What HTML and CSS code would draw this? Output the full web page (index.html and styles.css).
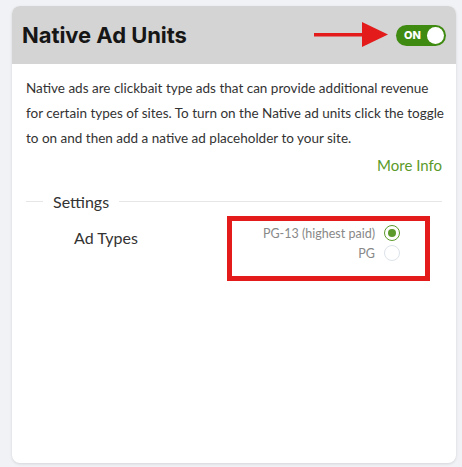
FILE: index.html
```html
<!DOCTYPE html>
<html>
<head>
<meta charset="utf-8">
<link rel="stylesheet" href="styles.css">
</head>
<body>
<div class="card">
  <div class="card-header">
    <h1 class="title">Native Ad Units</h1>
    <div class="header-right">
      <svg class="arrow" width="74" height="26" viewBox="0 0 74 26">
        <rect x="0" y="11" width="52" height="3.5" fill="#e31b1b"/>
        <polygon points="48,0 74,12.5 48,25" fill="#e31b1b"/>
      </svg>
      <div class="toggle"><span class="toggle-label">ON</span><span class="knob"></span></div>
    </div>
  </div>
  <div class="card-body">
    <p class="desc">Native ads are clickbait type ads that can provide additional revenue<br>for certain types of sites. To turn on the Native ad units click the toggle<br>to on and then add a native ad placeholder to your site.</p>
    <div class="more"><a class="more-link">More Info</a></div>
    <fieldset class="settings">
      <legend class="legend">Settings</legend>
      <div class="row">
        <div class="row-label">Ad Types</div>
        <div class="options">
          <label class="option"><span>PG-13 (highest paid)</span><span class="radio checked"></span></label>
          <label class="option"><span>PG</span><span class="radio"></span></label>
        </div>
      </div>
    </fieldset>
  </div>
</div>
</body>
</html>
```
FILE: styles.css
```css
html, body { margin: 0; padding: 0; }
body {
  background: #f1f2f6;
  width: 462px;
  height: 467px;
  padding: 6px 6px 0 12px;
  box-sizing: border-box;
  font-family: "Source Sans Pro", "Lato", "Noto Sans", sans-serif;
}
.card {
  width: 444px;
  height: 457px;
  background: #fff;
  border-radius: 8px;
  overflow: hidden;
  box-shadow: 0 1px 3px rgba(0,0,0,0.12);
  display: flex;
  flex-direction: column;
}
.card-header {
  height: 58px;
  background: #d4d4d4;
  display: flex;
  align-items: center;
  justify-content: space-between;
  padding: 0 10px 0 10px;
  flex: none;
}
.title {
  margin: 0;
  font-family: "Inter", "Liberation Sans", sans-serif;
  font-weight: 700;
  font-size: 22px;
  color: #161616;
  letter-spacing: -0.05px;
}
.header-right { display: flex; align-items: center; gap: 8px; }
.arrow { display: block; }
.toggle {
  width: 50px;
  height: 21px;
  border-radius: 11px;
  background: #3f8a10;
  display: flex;
  align-items: center;
  justify-content: space-between;
  padding: 0 2px 0 8px;
  box-sizing: border-box;
}
.toggle-label {
  font-family: "Inter", "Liberation Sans", sans-serif;
  font-weight: 800;
  font-size: 11px;
  color: #fff;
}
.knob { width: 17px; height: 17px; border-radius: 50%; background: #fff; }
.card-body { padding: 12px 14px 0 14px; }
.desc {
  margin: 0 -8px 0 0;
  font-size: 13.5px;
  line-height: 25px;
  color: #333;
}
.more { display: flex; justify-content: flex-end; margin-top: 2px; }
.more-link { color: #5b9a2a; font-size: 15px; line-height: 25px; }
.settings {
  margin: 14px 0 0 0;
  padding: 0;
  border: 0;
  border-top: 1px solid #e6e6e6;
}
.legend { font-size: 16px; color: #333; padding: 0 10px; margin-left: 17px; }
.row { display: flex; align-items: flex-start; padding-top: 5px; }
.row-label { width: 201px; padding-left: 48px; font-size: 16px; color: #333; box-sizing: border-box; padding-top: 12px; }
.options {
  width: 203px;
  height: 65px;
  border: 5px solid #e31b1b;
  box-sizing: border-box;
  display: flex;
  flex-direction: column;
  align-items: flex-end;
  padding: 4px 25px 0 0;
  gap: 4px;
}
.option { display: flex; align-items: center; gap: 9px; font-size: 12.5px; color: #888; }
.radio { width: 14px; height: 14px; border-radius: 50%; border: 1px solid #dde3ea; position: relative; }
.radio.checked { border-color: #5b9a2a; }
.radio.checked::after { content: ""; position: absolute; left: 3px; top: 3px; width: 8px; height: 8px; border-radius: 50%; background: #5b9a2a; }
```
